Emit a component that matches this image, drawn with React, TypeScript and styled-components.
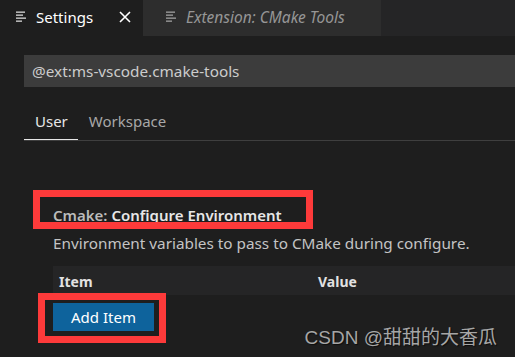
import React from 'react';
import styled, { createGlobalStyle } from 'styled-components';

const GlobalStyle = createGlobalStyle`
  html, body {
    margin: 0;
    padding: 0;
    background: #1e1e1e;
    overflow: hidden;
  }
  body {
    font-family: 'Segoe UI', 'Noto Sans', 'Noto Sans CJK SC', sans-serif;
  }
`;

const Page = styled.div`
  position: relative;
  width: 515px;
  height: 357px;
  background: #1e1e1e;
  overflow: hidden;
`;

const TabBar = styled.div`
  display: flex;
  height: 36px;
  background: #252526;
`;

const EditorTab = styled.div<{ active?: boolean; width: number }>`
  display: flex;
  align-items: center;
  width: ${(p) => p.width}px;
  box-sizing: border-box;
  padding: 0 0 3px ${(p) => (p.active ? 16 : 23)}px;
  background: ${(p) => (p.active ? '#1e1e1e' : '#2d2d2d')};
  color: ${(p) => (p.active ? '#ffffff' : '#969696')};
  font-size: ${(p) => (p.active ? 15 : 15.5)}px;
  font-style: ${(p) => (p.active ? 'normal' : 'italic')};
`;

const TabLabel = styled.span`
  margin-left: 9px;
  flex: 1;
  white-space: nowrap;
`;

const CloseButton = styled.span`
  display: flex;
  width: 12px;
  margin-right: 12px;
`;

const Content = styled.div`
  padding-left: 24px;
`;

const SearchBox = styled.div`
  margin-top: 19px;
  height: 32px;
  line-height: 32px;
  padding-left: 8px;
  background: #3c3c3c;
  color: #cccccc;
  font-size: 15.3px;
`;

const ScopeTabs = styled.div`
  display: flex;
  height: 53px;
  align-items: flex-end;
  border-bottom: 1px solid #3f3f3f;
`;

const ScopeTab = styled.div<{ active?: boolean }>`
  height: 36px;
  line-height: 34px;
  padding: 0 10px 0 11px;
  font-size: 15px;
  color: ${(p) => (p.active ? '#e7e7e7' : '#a8a8a8')};
  box-shadow: ${(p) => (p.active ? 'inset 0 -1px 0 #e7e7e7' : 'none')};
  margin-bottom: -1px;
  border-bottom: 1px solid transparent;
`;

const SettingItem = styled.div`
  position: relative;
  margin: 64px 0 0 29px;
`;

const SettingTitle = styled.div`
  height: 20px;
  line-height: 20px;
  font-size: 15px;
  font-weight: 600;
  color: #e7e7e7;
  white-space: nowrap;
`;

const Category = styled.span`
  color: #bbbbbb;
`;

const Description = styled.div`
  margin-top: 8px;
  line-height: 20px;
  font-size: 15.3px;
  color: #c4c4c4;
  white-space: nowrap;
`;

const TableHeader = styled.div`
  display: grid;
  grid-template-columns: 259px 1fr;
  margin-top: 13px;
  height: 29px;
  line-height: 32px;
  padding-left: 6px;
  background: #252526;
  font-size: 14px;
  font-weight: 700;
  color: #e2e2e2;
`;

const ButtonRow = styled.div`
  position: relative;
  margin-top: 8px;
`;

const AddButton = styled.button`
  width: 101px;
  height: 28px;
  border: none;
  padding: 0;
  background: #0e639c;
  color: #ffffff;
  font-family: inherit;
  font-size: 15px;
`;

const Annotation = styled.div<{ x: number; y: number; w: number; h: number }>`
  position: absolute;
  left: ${(p) => p.x}px;
  top: ${(p) => p.y}px;
  width: ${(p) => p.w}px;
  height: ${(p) => p.h}px;
  box-sizing: border-box;
  border: 7px solid #fd3a3a;
  pointer-events: none;
`;

const Watermark = styled.div`
  position: absolute;
  right: 18px;
  bottom: 8px;
  font-family: 'Liberation Sans', 'Noto Sans CJK SC', sans-serif;
  font-size: 19px;
  color: #a6a6a6;
  text-shadow: 1px 1px 1px rgba(0, 0, 0, 0.6);
  white-space: nowrap;
`;

const LinesIcon = ({ color }: { color: string }) => (
  <svg width="11" height="12" viewBox="0 0 11 12">
    <g fill={color}>
      <rect x="0" y="0.5" width="9" height="1.3" />
      <rect x="0" y="3.5" width="7" height="1.3" />
      <rect x="0" y="6.5" width="10" height="1.3" />
      <rect x="0" y="9.5" width="6" height="1.3" />
    </g>
  </svg>
);

const CloseIcon = () => (
  <svg width="12" height="12" viewBox="0 0 12 12">
    <path d="M1 1 L11 11 M11 1 L1 11" stroke="#ffffff" strokeWidth="1.6" />
  </svg>
);

export default function App() {
  return (
    <Page>
      <GlobalStyle />
      <TabBar>
        <EditorTab active width={143}>
          <LinesIcon color="#d8d8d8" />
          <TabLabel>Settings</TabLabel>
          <CloseButton>
            <CloseIcon />
          </CloseButton>
        </EditorTab>
        <EditorTab width={238}>
          <LinesIcon color="#a0a0a0" />
          <TabLabel>Extension: CMake Tools</TabLabel>
        </EditorTab>
      </TabBar>
      <Content>
        <SearchBox>@ext:ms-vscode.cmake-tools</SearchBox>
        <ScopeTabs>
          <ScopeTab active>User</ScopeTab>
          <ScopeTab>Workspace</ScopeTab>
        </ScopeTabs>
        <SettingItem>
          <SettingTitle>
            <Category>Cmake: </Category>Configure Environment
          </SettingTitle>
          <Annotation x={-20} y={-15} w={280} h={39} />
          <Description>Environment variables to pass to CMake during configure.</Description>
          <TableHeader>
            <span>Item</span>
            <span>Value</span>
          </TableHeader>
          <ButtonRow>
            <AddButton>Add Item</AddButton>
            <Annotation x={-15} y={-10} w={128} h={50} />
          </ButtonRow>
        </SettingItem>
      </Content>
      <Watermark>CSDN @甜甜的大香瓜</Watermark>
    </Page>
  );
}
